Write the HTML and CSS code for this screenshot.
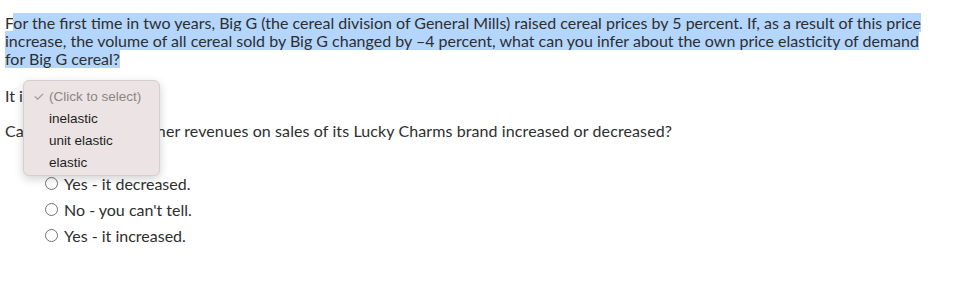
FILE: index.html
```html
<!DOCTYPE html>
<html>
<head>
<meta charset="utf-8">
<link rel="stylesheet" href="styles.css">
</head>
<body>
<div class="page">
  <p class="question">F<span class="sel">or the first time in two years, Big G (the cereal division of General Mills) raised cereal prices by 5 percent. If, as a result of this price increase, the volume of all cereal sold by Big G changed by –4 percent, what can you infer about the own price elasticity of demand for Big G cereal?</span></p>
  <p class="line">It is <span class="select-slot"></span>.</p>
  <p class="line second">Can you predict whether revenues on sales of its Lucky Charms brand increased or decreased?</p>
  <ul class="options">
    <li><span class="radio"></span>Yes - it decreased.</li>
    <li><span class="radio"></span>No - you can't tell.</li>
    <li><span class="radio"></span>Yes - it increased.</li>
  </ul>
  <div class="menu">
    <div class="item muted"><span class="check">✓</span>(Click to select)</div>
    <div class="item">inelastic</div>
    <div class="item">unit elastic</div>
    <div class="item">elastic</div>
  </div>
</div>
</body>
</html>
```
FILE: styles.css
```css
html, body {
  margin: 0;
  padding: 0;
  background: #ffffff;
}
.page {
  position: relative;
  padding: 14px 5px 0 5px;
  font-family: "Lato", "Liberation Sans", sans-serif;
  font-size: 16px;
  color: #2e2e2e;
}
.question {
  margin: 0;
  width: 930px;
  line-height: 18px;
}
.sel {
  background: #b4d6fd;
}
.line {
  margin: 19px 0 0 0;
  line-height: 18px;
}
.line.second {
  margin-top: 17px;
  letter-spacing: 0.1px;
}
.select-slot {
  display: inline-block;
  width: 120px;
}
.options {
  list-style: none;
  margin: 30px 0 0 0;
  padding: 0 0 0 40px;
}
.options li {
  display: flex;
  align-items: center;
  height: 26px;
}
.radio {
  width: 11px;
  height: 11px;
  border: 1px solid #707070;
  border-radius: 50%;
  margin-right: 6px;
  background: #fff;
}
.menu {
  position: absolute;
  left: 23px;
  top: 80px;
  width: 137px;
  height: 96px;
  box-sizing: border-box;
  padding: 5px 0;
  background: #ece4e4;
  border: 1px solid #d6cfcf;
  border-radius: 6px;
  box-shadow: 0 3px 10px rgba(0, 0, 0, 0.18);
  font-family: "Liberation Sans", "Inter", sans-serif;
  font-size: 13.5px;
  color: #1e1e1e;
}
.item {
  height: 22px;
  line-height: 22px;
  padding-left: 25px;
  position: relative;
}
.item.muted {
  color: #8a8585;
}
.check {
  position: absolute;
  left: 9px;
  top: 0;
  font-size: 13px;
  color: #9a9595;
}
```
